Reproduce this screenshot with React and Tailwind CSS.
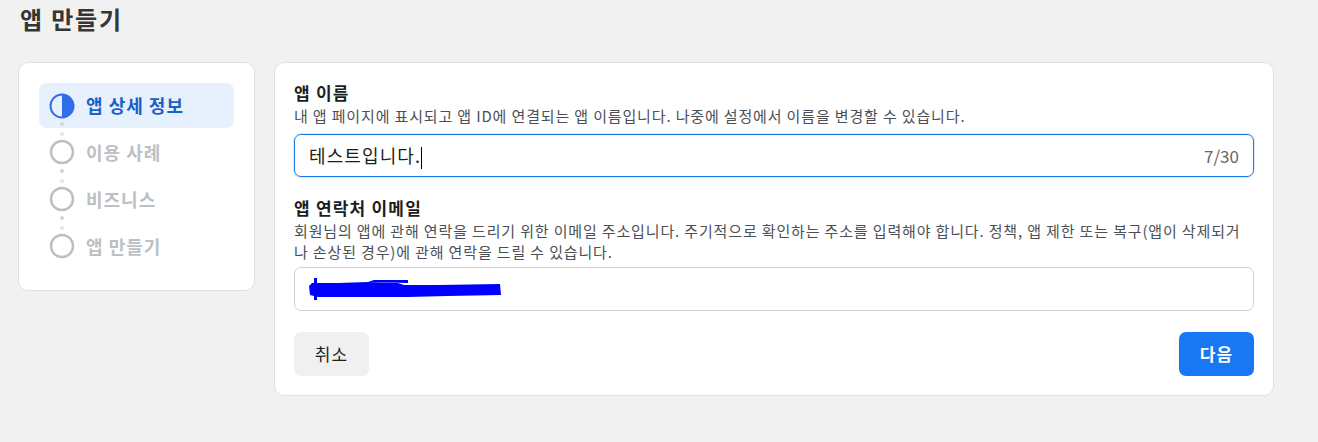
import React from "react";

const FONT = { fontFamily: '"Noto Sans CJK KR", "Noto Sans", sans-serif' };

const STEPS = [
  { label: "앱 상세 정보", active: true },
  { label: "이용 사례" },
  { label: "비즈니스" },
  { label: "앱 만들기" },
];

function StepIcon({ active }) {
  if (active) {
    return (
      <svg width="26" height="26" viewBox="0 0 26 26">
        <circle cx="13" cy="13" r="11.5" fill="none" stroke="#2f6ee8" strokeWidth="2" />
        <path d="M13 1.5 A11.5 11.5 0 0 1 13 24.5 Z" fill="#2f6ee8" />
      </svg>
    );
  }
  return (
    <svg width="26" height="26" viewBox="0 0 26 26">
      <circle cx="13" cy="13" r="11" fill="none" stroke="#bcc0c4" strokeWidth="2.5" />
    </svg>
  );
}

function Dots({ first }) {
  return (
    <div className={`relative flex flex-col items-center justify-center gap-[6px] w-[26px] h-[21px] ml-[10px] ${first ? "-mt-[10px]" : ""}`}>
      <span className="w-[4px] h-[4px] rounded-full bg-[#d3d5d9]" />
      <span className="w-[4px] h-[4px] rounded-full bg-[#e4e5e7]" />
    </div>
  );
}

export default function App() {
  return (
    <div className="w-[1318px] h-[442px] bg-[#f1f1f1] text-[#1c1e21]" style={FONT}>
      <h1 className="pl-[20px] h-[62px] pt-[1px] text-[24px] tracking-[1.8px] font-bold text-[#353535] leading-[36px]">앱 만들기</h1>
      <div className="flex items-start gap-[19px] pl-[18px]">
        <nav className="w-[237px] h-[229px] bg-white rounded-[10px] border border-[#e0e0e0] px-[20px] pt-[20px]">
          {STEPS.map((s, i) => (
            <div key={s.label}>
              {i > 0 && <Dots first={i === 1} />}
              <div
                className={`flex items-center gap-[11px] px-[10px] ${s.active ? "bg-[#e7f0fd] rounded-[8px] h-[45px]" : "h-[26px]"}`}
              >
                <StepIcon active={s.active} />
                <span className={`text-[18px] tracking-[1px] font-bold ${s.active ? "text-[#1b5fc9]" : "text-[#bcc0c4]"}`}>{s.label}</span>
              </div>
            </div>
          ))}
        </nav>
        <main className="w-[1000px] h-[334px] bg-white rounded-[10px] border border-[#e0e0e0] px-[19px] pt-[17px]">
          <div className="text-[17px] tracking-[1.2px] font-bold text-[#1c1e21] leading-[26px]">앱 이름</div>
          <p className="text-[15px] tracking-[0.85px] text-[#4b4f56] leading-[20px]">내 앱 페이지에 표시되고 앱 ID에 연결되는 앱 이름입니다. 나중에 설정에서 이름을 변경할 수 있습니다.</p>
          <div className="mt-[8px] h-[43px] rounded-[7px] border border-[#1877f2] shadow-[0_0_0_1px_rgba(24,119,242,0.15)] flex items-center pl-[14px] pr-[14px]">
            <span className="text-[18px] tracking-[1.1px] text-[#1c1e21] flex-1">테스트입니다.<span className="inline-block w-[1px] h-[22px] bg-black align-middle" /></span>
            <span className="text-[17px] text-[#65676b]">7/30</span>
          </div>
          <div className="mt-[19px] text-[17px] tracking-[1.2px] font-bold text-[#1c1e21] leading-[24px]">앱 연락처 이메일</div>
          <p className="w-[950px] text-[15px] tracking-[0.85px] text-[#4b4f56] leading-[21px]">회원님의 앱에 관해 연락을 드리기 위한 이메일 주소입니다. 주기적으로 확인하는 주소를 입력해야 합니다. 정책, 앱 제한 또는 복구(앱이 삭제되거 나 손상된 경우)에 관해 연락을 드릴 수 있습니다.</p>
          <div className="mt-[5px] h-[44px] rounded-[7px] border border-[#ced0d4] flex items-center pl-[13px]">
            <svg width="196" height="24" viewBox="0 0 196 24">
              <path d="M4 6 L 30 6 L 60 5 L 90 6 L 96 8 L 130 8 L 192 7 L 193 18 L 140 19 L 100 20 L 50 20 L 10 20 L 2 18 L 1 9 Z" fill="#0000ff" />
              <path d="M6 1 L 9 1 L 9 23 L 6 23 Z" fill="#0000ff" />
              <path d="M60 5 L 66 3 L 100 3 L 100 6 Z" fill="#0000ff" />
            </svg>
          </div>
          <div className="mt-[21px] flex justify-between">
            <button className="w-[75px] h-[44px] rounded-[7px] bg-[#f0f0f0] text-[17px] tracking-[1px] text-[#1c1e21]">취소</button>
            <button className="w-[75px] h-[44px] rounded-[7px] bg-[#1877f2] text-[17px] tracking-[1px] font-bold text-white">다음</button>
          </div>
        </main>
      </div>
    </div>
  );
}
